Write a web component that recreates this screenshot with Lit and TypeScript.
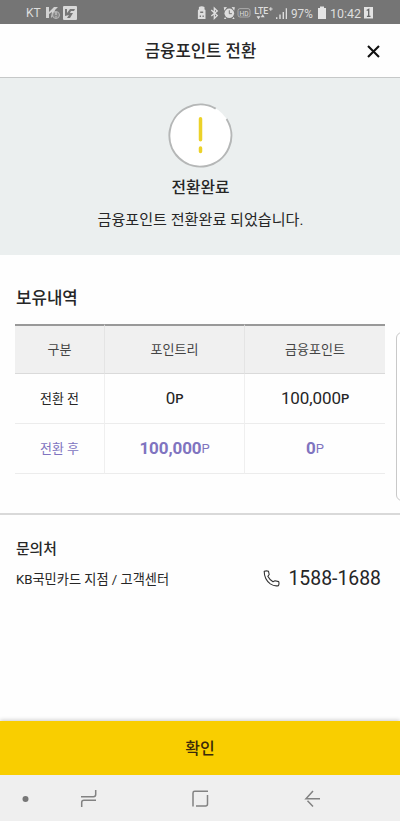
import { LitElement, html, css } from "lit";
import { customElement } from "lit/decorators.js";

@customElement("status-bar")
class StatusBar extends LitElement {
  static styles = css`
    :host { display: flex; height: 24px; flex: none; align-items: center; background: #757575; color: #dedede;
      font: 13.5px/24px Roboto, sans-serif; padding: 1px 26px 0 26px; box-sizing: border-box; }
    svg { display: block; flex: none; }
    .carrier { width: 19px; font-size: 12px; }
    .time { white-space: nowrap; transform-origin: left; transform: scaleX(0.92); width: 33px; }
    .battery { width: 25px; transform-origin: left; transform: scaleX(0.87); }
    .spacer { flex: 1; }
  `;
  render() {
    return html`
      <span class="carrier">KT</span>
      <svg width="33" height="16" viewBox="0 0 33 16">
        <path d="M1 2h3v5l5-5h4l-3 3-1 5-3 3 1-6-3 2v4H1z" fill="#d2d2d2"/>
        <circle cx="11" cy="10" r="3.5" fill="#888" stroke="#b8b8b8"/><path d="M11 7v3M11 11.3v1.2" stroke="#d8d8d8"/>
        <rect x="18" y="1" width="14" height="14" rx="1" fill="#d9d9d9"/>
        <path d="M20 4h2v4l3-4h5l-1 2h-3l-1 2h3l-3 5h-3l2-3-4 1z" fill="#777"/>
      </svg>
      <span class="spacer"></span>
      <svg width="94" height="18" viewBox="-3 0 94 18">
        <g fill="#dedede">
          <g transform="translate(-3.3 0)">
            <path d="M1.2 6.5Q1.2 5.5 2.2 5.5V3Q5 1.3 7.8 3v2.5Q8.8 5.5 8.8 6.5V15H1.2z"/>
            <path d="M3.5 7.5h3V9h-3zM3 11.5h1.3V13H3zM5.8 11.5h1.3V13H5.8z" fill="#777"/>
          </g>
          <path d="M11.3 6l6 5.5-3 3V4l3 3-6 5" fill="none" stroke="#dedede" stroke-width="1.3"/>
          <circle cx="29.3" cy="9.3" r="4.8"/><path d="M24.4 6.8l-.7-3.6 3.3-.2zM34.2 6.8l.7-3.6-3.3-.2zM25 13l-1 2h2.4zM33.6 13l1 2h-2.4z"/>
          <path d="M29.3 6.3v3.4h2.6" fill="none" stroke="#777"/>
          <rect x="38" y="4.6" width="12" height="8.4" rx="2" fill="none" stroke="#c2c2c2" stroke-width=".7"/>
          <text x="39.5" y="11.6" font-size="8" font-family="Roboto" textLength="9" lengthAdjust="spacingAndGlyphs">HD</text>
          <text x="54.3" y="9.5" font-size="8.5" font-weight="500" font-family="Roboto" textLength="14" lengthAdjust="spacingAndGlyphs">LTE</text>
          <path d="M69 5h3.6M70.8 3.2v3.6" fill="none" stroke="#dedede"/>
          <path d="M56.5 12.3l2 3 2-3zM60.7 13.2l2-3 2 3z"/>
          <path d="M76 13.2h1.4V15H76zM79.3 10.5h1.4V15h-1.4zM82.6 8H84v7h-1.4zM85.7 4.3H87V15h-1.3z"/>
        </g>
      </svg>
      <span class="battery">97%</span>
      <svg width="14" height="16" viewBox="0 0 14 16"><path d="M2 3h2V1.5h4V3h2v11H2z" fill="#e5e5e5"/></svg>
      <span class="time">10:42</span>
      <svg width="11" height="14" viewBox="0 0 11 14"><path d="M1 1h9v11.5H1z" fill="#e3e3e3"/><path d="M3.7 4.5l2-1.2v7M3.9 10.3h3.6" fill="none" stroke="#666" stroke-width="1.3"/></svg>
    `;
  }
}

const rows = [
  { name: "전환 전", a: "0", b: "100,000", after: false },
  { name: "전환 후", a: "100,000", b: "0", after: true },
];

@customElement("app-root")
class AppRoot extends LitElement {
  static styles = css`
    :host { display: flex; flex-direction: column; position: relative; width: 400px; height: 821px; overflow: hidden;
      background: #fefefe; color: #262626; font-family: Roboto, "Noto Sans CJK KR", sans-serif; }
    * { box-sizing: border-box; }
    h1, h2, h3, p { margin: 0; font-weight: 500; }
    svg { display: block; flex: none; }
    .header { height: 54px; flex: none; display: grid; grid-template-columns: 40px 1fr 40px; align-items: center;
      border-bottom: 1px solid #c6c8c8; padding: 0 7px; }
    .title { grid-column: 2; text-align: center; font-size: 16.7px; line-height: 24px; padding: 2px 0 0 1px; }
    .close { justify-self: end; margin: 1px 13px 0 0; }
    .hero { height: 177px; flex: none; background: #ebefef; display: flex; flex-direction: column; align-items: center; padding-top: 25px; }
    .done { font-size: 15.8px; line-height: 24px; margin-top: 7px; padding-left: 1px; }
    .message { font-size: 15.1px; line-height: 22px; font-weight: 400; margin-top: 9px; padding-left: 1px; }
    .holdings { height: 258px; flex: none; padding: 31px 15px 0; }
    .holdings h2 { font-size: 16.8px; line-height: 25px; padding-left: 1px; }
    .table { margin-top: 13px; display: grid; grid-template-columns: 90px 140px 140px; grid-template-rows: 50px 50px 50px; }
    .cell { display: flex; align-items: center; justify-content: center; border-right: 1px solid #efefef;
      border-bottom: 1px solid #ececec; padding-bottom: 2px; font-size: 17px; letter-spacing: -0.1px; }
    .cell:nth-child(3n) { border-right: 0; }
    .head { background: #f0f0f0; border-top: 2px solid #999; border-bottom-color: #dadada; border-right-color: #e4e4e4; font-size: 13px; color: #444; letter-spacing: 0; }
    .name { font-size: 13px; letter-spacing: 0; }
    .unit { font-size: 13px; padding-top: 2px; }
    .before .unit { font-weight: 500; }
    .after { color: #8074c0; }
    .after b { font-weight: 700; }
    .contact { border-top: 2px solid #d9d9d9; padding: 23px 19px 0 16px; flex: 1; }
    .contact h3 { font-size: 14.8px; line-height: 22px; }
    .line { display: flex; align-items: center; justify-content: space-between; height: 28px; margin-top: 4px; }
    .center { font-size: 13.2px; padding-top: 1px; }
    .phone { display: flex; align-items: center; gap: 8px; font-size: 19.4px; line-height: 28px; padding-top: 1px; }
    .phone svg { margin-top: -1px; }
    .confirm { height: 54px; flex: none; border: 0; background: #f9ce00; color: #3b2a0a; font: 500 16px/24px Roboto, "Noto Sans CJK KR", sans-serif;
      box-shadow: 0 -1px 4px rgba(0, 0, 0, 0.2); padding: 1px 0 0; }
    .nav { height: 46px; flex: none; background: #efefef; }
    .drawer { position: absolute; left: 396px; top: 332px; width: 12px; height: 169px; border: 1px solid #c9c9c9; border-radius: 6px; background: #fff; }
  `;

  private cell(value: string, after: boolean) {
    const cls = after ? "cell after" : "cell before";
    return html`<div class=${cls}>${after ? html`<b>${value}</b>` : value}<span class="unit">P</span></div>`;
  }

  render() {
    return html`
      <status-bar></status-bar>
      <header class="header">
        <h1 class="title">금융포인트 전환</h1>
        <svg class="close" width="13" height="13" viewBox="0 0 13 13"><path d="M1 1l11 11M12 1L1 12" stroke="#111" stroke-width="2.1"/></svg>
      </header>
      <section class="hero">
        <svg width="66" height="66" viewBox="0 0 66 66">
          <circle cx="33.3" cy="32.3" r="31" fill="#fff"/>
          <path d="M48.7 5.6A31 31 0 1 0 59.6 16" fill="none" stroke="#b5b7b7" stroke-width="2"/>
          <path d="M33.5 15.7v21M33.5 45v3.5" stroke="#ecd229" stroke-width="3.5" stroke-linecap="round"/>
        </svg>
        <h2 class="done">전환완료</h2>
        <p class="message">금융포인트 전환완료 되었습니다.</p>
      </section>
      <section class="holdings">
        <h2>보유내역</h2>
        <div class="table">
          ${["구분", "포인트리", "금융포인트"].map((t) => html`<div class="cell head">${t}</div>`)}
          ${rows.map((r) => html`
            <div class=${r.after ? "cell name after" : "cell name"}>${r.name}</div>
            ${this.cell(r.a, r.after)}${this.cell(r.b, r.after)}`)}
        </div>
      </section>
      <section class="contact">
        <h3>문의처</h3>
        <div class="line">
          <span class="center">KB국민카드 지점 / 고객센터</span>
          <span class="phone">
            <svg width="17" height="17" viewBox="0 0 17 17"><path d="M1.2 1.3Q3.7.5 5.5 1.3L6.2 4.5 4.8 6.3Q6.4 9.5 10 11.8L12 10.7 15.7 11.6Q16.4 13.5 15.5 15.6Q11.5 16.6 7.3 13.9Q1.2 9.3 1.2 1.3Z" fill="none" stroke="#333" stroke-width="1.1" stroke-linejoin="round"/></svg>
            1588-1688
          </span>
        </div>
      </section>
      <button class="confirm">확인</button>
      <svg class="nav" width="400" height="46" viewBox="0 0 400 46" fill="none" stroke="#828282" stroke-width="1.5">
        <circle cx="25.5" cy="24" r="3" fill="#777" stroke="none"/>
        <path d="M81 21.7H93.5Q95.7 21.7 95.7 19.5V15M96 25.3H84Q81.7 25.3 81.7 27.5V32"/>
        <path d="M193 31.5V18Q193 16.3 194.7 16.3H208M207.5 20V29Q207.5 31 205.5 31H196"/>
        <path d="M320 23.7H306L313 16M307.5 25.8L313 31.5"/>
      </svg>
      <div class="drawer"></div>
    `;
  }
}
